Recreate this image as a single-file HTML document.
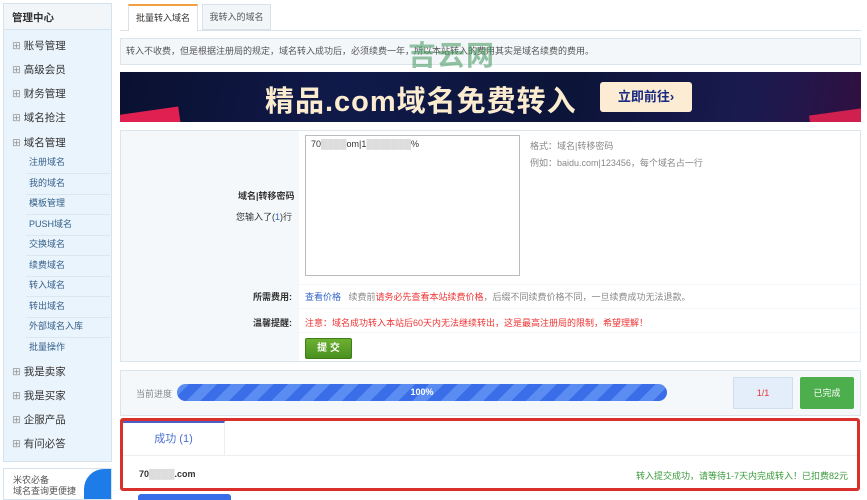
<!DOCTYPE html>
<html><head><meta charset="utf-8"><style>
*{margin:0;padding:0;box-sizing:border-box}
body{width:867px;height:500px;overflow:hidden;background:#fff;font-family:"Liberation Sans","Noto Sans CJK SC",sans-serif;font-size:9px;color:#333;position:relative}
.a{position:absolute}
.side{left:3px;top:3px;width:109px;height:459px;background:#eaf4fc;border:1px solid #d5e3ef}
.sh{left:3px;top:3px;width:109px;height:27px;background:#f3f6f9;border:1px solid #d5e3ef;font-size:10.5px;font-weight:bold;padding:6px 0 0 8px;color:#333}
.m{left:12px;font-size:10.5px;color:#333}
.m:before{content:"⊞ ";color:#999}
.s{left:26px;width:84px;font-size:9px;color:#35608a;border-bottom:1px solid #dbe8f2;height:20px;line-height:16px;padding-left:3px}
</style></head><body>
<div class="a side"></div><div class="a sh">管理中心</div>
<div class="a m" style="top:38px">账号管理</div>
<div class="a m" style="top:62px">高级会员</div>
<div class="a m" style="top:86px">财务管理</div>
<div class="a m" style="top:110px">域名抢注</div>
<div class="a m" style="top:135px">域名管理</div>
<div class="a s" style="top:154px">注册域名</div>
<div class="a s" style="top:175px">我的域名</div>
<div class="a s" style="top:195px">模板管理</div>
<div class="a s" style="top:216px">PUSH域名</div>
<div class="a s" style="top:236px">交换域名</div>
<div class="a s" style="top:257px">续费域名</div>
<div class="a s" style="top:277px">转入域名</div>
<div class="a s" style="top:298px">转出域名</div>
<div class="a s" style="top:318px">外部域名入库</div>
<div class="a s" style="top:339px;border:none">批量操作</div>
<div class="a m" style="top:364px">我是卖家</div>
<div class="a m" style="top:388px">我是买家</div>
<div class="a m" style="top:412px">企服产品</div>
<div class="a m" style="top:436px">有问必答</div>
<div class="a" style="left:3px;top:468px;width:109px;height:32px;background:#fff;border:1px solid #d5e3ef;overflow:hidden;padding:6px 0 0 9px;font-size:9px;color:#555;line-height:11px">米农必备<br>域名查询更便捷<div class="a" style="left:80px;top:0;width:40px;height:40px;border-radius:20px 0 0 0;background:#1e7ce8"></div></div>

<div class="a" style="left:120px;top:30px;width:741px;height:1px;background:#d9e2ea"></div>
<div class="a" style="left:128px;top:4px;width:70px;height:27px;background:#fff;border:1px solid #d9e2ea;border-top:2px solid #f0a040;border-bottom:none;text-align:center;line-height:24px">批量转入域名</div>
<div class="a" style="left:202px;top:4px;width:69px;height:26px;background:#f3f6f9;border:1px solid #d9e2ea;text-align:center;line-height:24px;color:#555">我转入的域名</div>
<div class="a" style="left:120px;top:38px;width:741px;height:27px;background:#f4f7fa;border:1px solid #dce4ec;line-height:25px;padding-left:5px;color:#555">转入不收费，但是根据注册局的规定，域名转入成功后，必须续费一年，所以本站转入的费用其实是域名续费的费用。</div>
<div class="a" style="left:408px;top:34px;font-size:28px;font-weight:bold;color:rgba(60,150,90,.55);letter-spacing:1px">吉云网</div>
<div class="a" style="left:120px;top:72px;width:741px;height:50px;background:linear-gradient(100deg,#0a1030 0%,#101a4a 30%,#0c1438 60%,#1a1a50 85%,#301040 100%);overflow:hidden">
<div class="a" style="left:-20px;top:40px;width:80px;height:20px;background:#e02050;transform:rotate(-8deg)"></div>
<div class="a" style="left:690px;top:38px;width:80px;height:20px;background:#d02050;transform:rotate(-8deg)"></div>
<div class="a" style="left:145px;top:6px;font-size:29px;font-weight:bold;color:#fbecd0;letter-spacing:1px">精品.com域名免费转入</div>
<div class="a" style="left:480px;top:10px;width:92px;height:30px;background:#fbecd3;border-radius:3px;color:#1a2a80;font-size:13px;font-weight:bold;text-align:center;line-height:30px">立即前往›</div>
</div>

<div class="a" style="left:120px;top:130px;width:741px;height:232px;background:#f5f8fb;border:1px solid #dce4ec"></div>
<div class="a" style="left:299px;top:131px;width:561px;height:153px;background:#fff"></div>
<div class="a" style="left:299px;top:285px;width:561px;height:23px;background:#fff"></div>
<div class="a" style="left:299px;top:309px;width:561px;height:23px;background:#fff"></div>
<div class="a" style="left:299px;top:333px;width:561px;height:28px;background:#fff"></div>
<div class="a" style="left:238px;top:189px;font-weight:bold">域名|转移密码</div>
<div class="a" style="left:236px;top:210px">您输入了(<span style="color:#36c">1</span>)行</div>
<div class="a" style="left:305px;top:135px;width:215px;height:141px;border:1px solid #bbb;padding:3px 5px">70<span style="color:#ddd">████</span>om|1<span style="color:#ddd">███████</span>%</div>
<div class="a" style="left:530px;top:139px;color:#888">格式：域名|转移密码</div>
<div class="a" style="left:530px;top:156px;color:#888">例如：baidu.com|123456，每个域名占一行</div>
<div class="a" style="left:253px;top:290px;font-weight:bold">所需费用:</div>
<div class="a" style="left:305px;top:290px;color:#888"><span style="color:#36c">查看价格</span>&nbsp;&nbsp; 续费前<span style="color:#e33">请务必先查看本站续费价格</span>，后缀不同续费价格不同，一旦续费成功无法退款。</div>
<div class="a" style="left:253px;top:316px;font-weight:bold">温馨提醒:</div>
<div class="a" style="left:305px;top:316px;color:#e33">注意：域名成功转入本站后60天内无法继续转出，这是最高注册局的限制，希望理解！</div>
<div class="a" style="left:305px;top:338px;width:47px;height:21px;background:linear-gradient(#6cb030,#4a9020);border:1px solid #3f7d1a;color:#fff;font-weight:bold;text-align:center;line-height:19px;border-radius:2px;font-size:10px">提 交</div>

<div class="a" style="left:120px;top:370px;width:741px;height:46px;background:#f5f8fb;border:1px solid #dce4ec"></div>
<div class="a" style="left:136px;top:387px;color:#888">当前进度</div>
<div class="a" style="left:177px;top:384px;width:490px;height:17px;border-radius:9px;background:repeating-linear-gradient(-45deg,#3a6ee8 0 10px,#5a8cf2 10px 20px);color:#fff;text-align:center;line-height:17px;font-weight:bold">100%</div>
<div class="a" style="left:733px;top:377px;width:60px;height:32px;background:#e3eefa;border:1px solid #d0def0;color:#e33;text-align:center;line-height:30px">1/1</div>
<div class="a" style="left:800px;top:377px;width:54px;height:32px;background:#4cae4c;color:#fff;text-align:center;line-height:32px;border-radius:2px">已完成</div>

<div class="a" style="left:120px;top:418px;width:740px;height:73px;border:3px solid #d9302c;border-radius:3px;background:#fff"></div>
<div class="a" style="left:123px;top:421px;width:102px;height:34px;border-top:2px solid #4a5fc8;border-right:1px solid #eee;color:#4a6fd0;font-size:11px;text-align:center;line-height:32px">成功 (1)</div>
<div class="a" style="left:123px;top:455px;width:734px;height:1px;background:#eee"></div>
<div class="a" style="left:139px;top:469px;font-weight:bold;color:#333">70<span style="color:#ddd">████</span>.com</div>
<div class="a" style="left:636px;top:469px;color:#3a9a3a">转入提交成功，请等待1-7天内完成转入！已扣费82元</div>
<div class="a" style="left:138px;top:494px;width:93px;height:6px;background:#3a6ee8;border-radius:3px 3px 0 0"></div>
</body></html>
